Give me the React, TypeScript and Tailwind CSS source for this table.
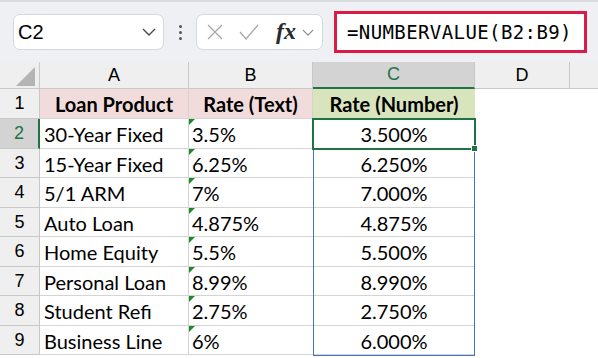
import React from 'react';

const rows = [
  { n: 2, product: '30-Year Fixed', text: '3.5%', num: '3.500%', h: 'h-[30px]' },
  { n: 3, product: '15-Year Fixed', text: '6.25%', num: '6.250%', h: 'h-[29px]' },
  { n: 4, product: '5/1 ARM', text: '7%', num: '7.000%', h: 'h-[30px]' },
  { n: 5, product: 'Auto Loan', text: '4.875%', num: '4.875%', h: 'h-[29px]' },
  { n: 6, product: 'Home Equity', text: '5.5%', num: '5.500%', h: 'h-[30px]' },
  { n: 7, product: 'Personal Loan', text: '8.99%', num: '8.990%', h: 'h-[29px]' },
  { n: 8, product: 'Student Refi', text: '2.75%', num: '2.750%', h: 'h-[30px]' },
  { n: 9, product: 'Business Line', text: '6%', num: '6.000%', h: 'h-[29px]' },
];

const cellFont = "font-['Lato',sans-serif] text-[20px] text-black";
const headFont = "font-['Liberation_Sans',sans-serif] text-[18px]";

const Chevron = ({ className }: { className?: string }) => (
  <svg viewBox="0 0 14 8" className={className} fill="none" stroke="currentColor" strokeWidth="1.4">
    <path d="M1 1l6 6 6-6" />
  </svg>
);

const Toolbar = () => (
  <div className="h-[62px] bg-[#eef0f3] border-t-[2px] border-[#d9dbde] flex items-center pl-[13px]">
    {/* Name box */}
    <div className="w-[151px] h-[36px] bg-white border border-[#d6d8db] rounded-[7px] flex items-center justify-between pl-[4px] pr-[7px]">
      <span className="font-['Liberation_Sans',sans-serif] text-[20px] text-black">C2</span>
      <Chevron className="w-[14px] h-[8px] text-[#4a4a4a]" />
    </div>
    <div className="w-[32px] flex flex-col items-center gap-[3px]">
      <span className="w-[3px] h-[3px] rounded-full bg-[#555]" />
      <span className="w-[3px] h-[3px] rounded-full bg-[#555]" />
      <span className="w-[3px] h-[3px] rounded-full bg-[#555]" />
    </div>
    {/* Formula controls */}
    <div className="w-[127px] h-[36px] bg-white border border-[#d6d8db] rounded-[7px] flex items-center pl-[10px]">
      <svg viewBox="0 0 16 16" className="w-[16px] h-[16px] text-[#a6a6a6]" fill="none" stroke="currentColor" strokeWidth="1.3">
        <path d="M1 1l14 14M15 1L1 15" />
      </svg>
      <svg viewBox="0 0 20 16" className="w-[20px] h-[16px] ml-[16px] text-[#a6a6a6]" fill="none" stroke="currentColor" strokeWidth="1.3">
        <path d="M1 8l6 7L19 1" />
      </svg>
      <span className="ml-[17px] font-['Liberation_Serif',serif] italic text-[24px] font-bold text-[#2a2a2a] leading-none -mt-[3px]">fx</span>
      <Chevron className="w-[12px] h-[7px] ml-[6px] text-[#8a8a8a]" />
    </div>
    {/* Formula bar */}
    <div className="ml-[11px] w-[253px] h-[42px] bg-white border-[3px] border-[#dc1a46] flex items-center pl-[10px]">
      <span className="font-['DejaVu_Sans_Mono',monospace] text-[19px] tracking-[0.4px] text-black">=NUMBERVALUE(B2:B9)</span>
    </div>
  </div>
);

export default function App() {
  return (
    <div className="w-[598px] h-[358px] overflow-hidden bg-white">
      <Toolbar />
      <div className="relative">
        <div className="grid grid-cols-[40px_149px_124px_162px_95px_1fr]">
          {/* Column headers */}
          <div className="h-[27px] bg-[#efefef] border-r border-b border-[#c8c8c8] relative">
            <svg viewBox="0 0 20 20" className="absolute right-[4px] bottom-[2px] w-[19px] h-[19px]">
              <path d="M20 0L20 20L0 20Z" fill="#b4b4b4" />
            </svg>
          </div>
          {['A', 'B'].map((c) => (
            <div key={c} className={`h-[27px] bg-[#efefef] border-r border-b border-[#c8c8c8] flex items-center justify-center text-black ${headFont}`}>
              {c}
            </div>
          ))}
          <div className={`h-[27px] bg-[#d3d3d3] border-r border-[#c8c8c8] border-b-[2px] border-b-[#217346] flex items-center justify-center text-[#217346] ${headFont}`}>
            C
          </div>
          <div className={`h-[27px] bg-[#efefef] border-r border-b border-[#c8c8c8] flex items-center justify-center text-black ${headFont}`}>
            D
          </div>
          <div className="h-[27px] bg-[#efefef] border-b border-[#c8c8c8]" />

          {/* Row 1 */}
          <div className={`h-[30px] bg-[#efefef] border-r border-b border-[#c8c8c8] flex items-center justify-center text-black ${headFont}`}>1</div>
          <div className={`h-[30px] bg-[#f2dcdb] border-r border-b border-[#d4d4d4] flex items-center justify-center font-bold ${cellFont}`}>Loan Product</div>
          <div className={`h-[30px] bg-[#f2dcdb] border-r border-b border-[#d4d4d4] flex items-center justify-center font-bold ${cellFont}`}>Rate (Text)</div>
          <div className={`h-[30px] bg-[#d8e4bc] border-b border-[#d4d4d4] flex items-center justify-center font-bold ${cellFont}`}>Rate (Number)</div>
          <div className="h-[30px]" />
          <div className="h-[30px]" />

          {rows.map((r) => {
            const sel = r.n === 2;
            return (
              <React.Fragment key={r.n}>
                <div
                  className={`${r.h} border-b border-[#c8c8c8] flex items-center justify-center ${headFont} ${
                    sel ? 'bg-[#d3d3d3] text-[#217346] border-r-[2px] border-r-[#217346]' : 'bg-[#efefef] text-black border-r border-r-[#c8c8c8]'
                  }`}
                >
                  {r.n}
                </div>
                <div className={`${r.h} border-r border-b border-[#d4d4d4] flex items-center pl-[4px] pt-[1px] ${cellFont}`}>{r.product}</div>
                <div className={`${r.h} relative border-b border-[#d4d4d4] flex items-center pl-[3px] pt-[1px] ${cellFont}`}>
                  <span className="absolute left-0 top-0 w-0 h-0 border-t-[6px] border-t-[#1b8a2a] border-r-[6px] border-r-transparent" />
                  {r.text}
                </div>
                <div className={`${r.h} border-b border-[#d4d4d4] flex items-center justify-center pt-[1px] ${cellFont}`}>{r.num}</div>
                <div className={r.h} />
                <div className={r.h} />
              </React.Fragment>
            );
          })}
        </div>

        {/* Spill range highlight C2:C9 */}
        <div className="absolute left-[313px] top-[57px] w-[162px] h-[237px] border-[1.5px] border-[#4472c4] pointer-events-none" />
        {/* Active cell C2 */}
        <div className="absolute left-[312px] top-[56px] w-[164px] h-[32px] border-[2.5px] border-[#217346] pointer-events-none" />
        <div className="absolute left-[471px] top-[83px] w-[7px] h-[7px] bg-[#217346] border border-white pointer-events-none" />
      </div>
    </div>
  );
}
